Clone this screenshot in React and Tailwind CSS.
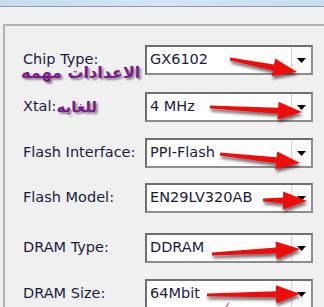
import React from "react";

const rows = [
  { label: "Chip Type:", value: "GX6102", gap: "mt-[19px]" },
  { label: "Xtal:", value: "4 MHz", gap: "mt-[17px]", note: "للغايه" },
  { label: "Flash Interface:", value: "PPI-Flash", gap: "mt-[16px]" },
  { label: "Flash Model:", value: "EN29LV320AB", gap: "mt-[15px]" },
  { label: "DRAM Type:", value: "DDRAM", gap: "mt-[20px]" },
  { label: "DRAM Size:", value: "64Mbit", gap: "mt-[16px]" },
];

const arrows = [
  [230, 59, 297, 72],
  [210, 107, 302, 112],
  [220, 154, 300, 163],
  [263, 200, 307, 201],
  [212, 254, 300, 249],
  [207, 295, 300, 294],
];

function arrowPoints(x1, y1, x2, y2) {
  const len = Math.hypot(x2 - x1, y2 - y1);
  const ux = (x2 - x1) / len;
  const uy = (y2 - y1) / len;
  const nx = -uy;
  const ny = ux;
  const head = Math.min(24, len * 0.55);
  const bx = x2 - ux * head;
  const by = y2 - uy * head;
  const p = (x, y, s) => `${(x + nx * s).toFixed(1)},${(y + ny * s).toFixed(1)}`;
  return [
    p(x1, y1, -1.5),
    p(bx, by, -3),
    p(bx, by, -9),
    `${x2},${y2}`,
    p(bx, by, 9),
    p(bx, by, 3),
    p(x1, y1, 1.5),
  ].join(" ");
}

function Combo({ value }) {
  return (
    <div className="flex h-[30px] w-[168px] border-2 border-t-[#6f6f6f] border-l-[#6f6f6f] border-r-[#8d8d8d] border-b-[#8d8d8d] bg-white">
      <div className="flex flex-1 items-center pl-[3px] text-[14.5px] text-[#1b1b3d]">
        {value}
      </div>
      <div className="flex w-[20px] items-center justify-center border-l border-[#d4d4d4] bg-[#fafafa]">
        <svg width="9" height="5" viewBox="0 0 9 5">
          <path d="M0 0h9L4.5 5z" fill="#000" />
        </svg>
      </div>
    </div>
  );
}

export default function App() {
  return (
    <div
      className="relative h-[307px] w-[324px] overflow-hidden bg-[#f0f0f0]"
      style={{ fontFamily: '"DejaVu Sans", sans-serif' }}
    >
      <div className="h-[7px] border-b border-[#8a9db5] bg-gradient-to-r from-[#c6daf1] via-[#d6e5f7] to-[#c9dcf2]" />

      <div className="ml-[3px] mt-[17px] border-l-2 border-t-2 border-[#b2b2b2] pb-6 pl-[18px]">
        {rows.map((row) => (
          <div key={row.label} className={`flex items-center ${row.gap}`}>
            <div className="flex w-[122px] items-center text-[14.5px] text-[#1b1b3d]">
              <span>{row.label}</span>
              {row.note && (
                <span className="text-[15px] font-bold text-[#7b1a86] [text-shadow:2px_2px_2px_#8a8a8a]">
                  {row.note}
                </span>
              )}
            </div>
            <Combo value={row.value} />
          </div>
        ))}
      </div>

      <div className="absolute left-[21px] top-[61px] text-[16px] font-bold text-[#7b1a86] [text-shadow:2px_2px_2px_#8a8a8a]">
        الاعدادات مهمه
      </div>

      <svg className="pointer-events-none absolute inset-0" width="324" height="307">
        <defs>
          <filter id="sh" x="-20%" y="-50%" width="140%" height="200%">
            <feDropShadow dx="1" dy="3" stdDeviation="1.6" floodColor="#000" floodOpacity="0.55" />
          </filter>
        </defs>
        {arrows.map(([x1, y1, x2, y2], i) => (
          <polygon key={i} points={arrowPoints(x1, y1, x2, y2)} fill="#ee1111" filter="url(#sh)" />
        ))}
        <path d="M226 307l3-4" stroke="#e8455a" strokeWidth="1.2" />
      </svg>
    </div>
  );
}
